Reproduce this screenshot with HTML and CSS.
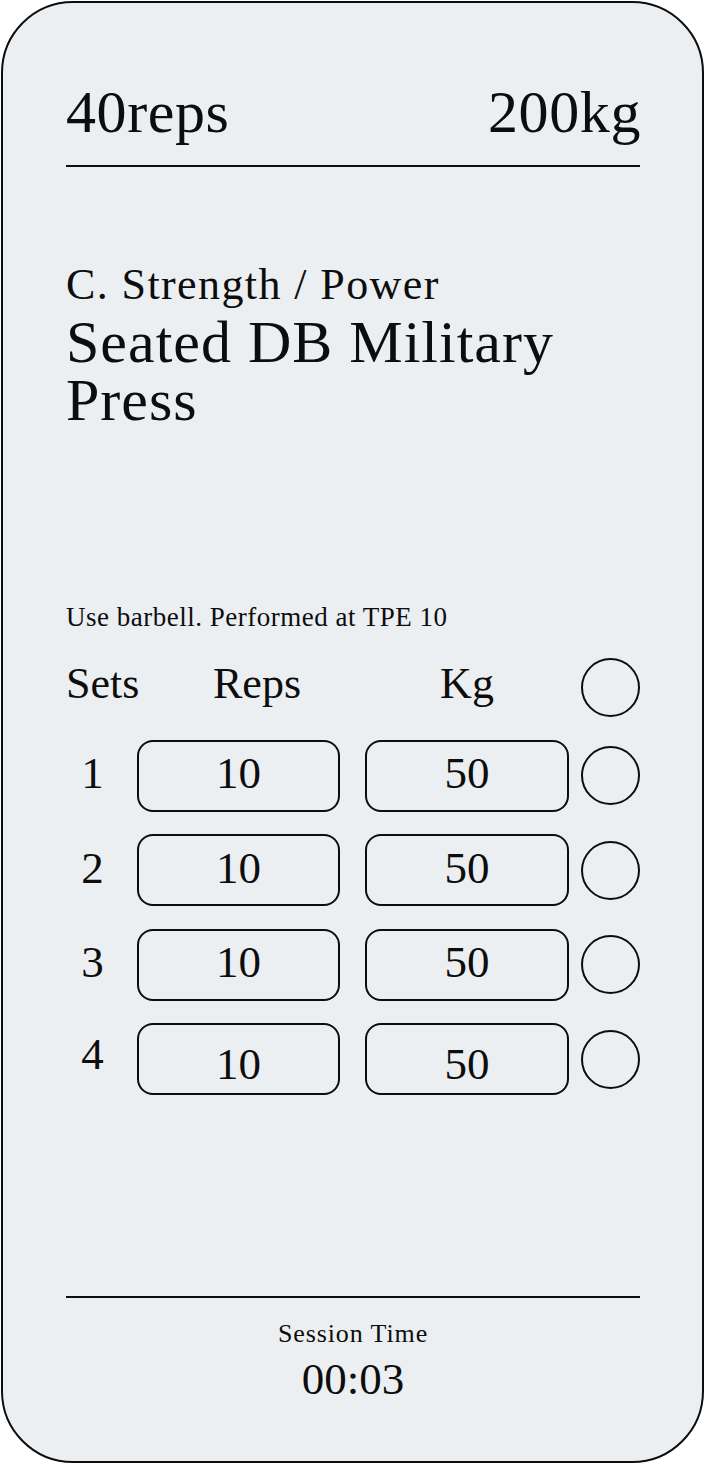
FILE: index.html
```html
<!DOCTYPE html>
<html lang="en">

<head>
  <meta charset="UTF-8">
  <meta name="viewport" content="width=device-width, initial-scale=1.0">
  <title>Workout - Seated DB Military Press</title>
  <link rel="stylesheet" href="styles.css">
</head>

<body>
  <div class="phone">
    <header class="totals">
      <span>40reps</span>
      <span>200kg</span>
    </header>

    <section class="exercise">
      <p class="category">C. Strength / Power</p>
      <h1 class="name">Seated DB Military Press</h1>
    </section>

    <p class="note">Use barbell. Performed at TPE 10</p>

    <div class="sets">
      <div class="set-row set-head">
        <span class="label">Sets</span>
        <span class="label label-reps">Reps</span>
        <span class="label label-kg">Kg</span>
        <span class="check"></span>
      </div>
      <div class="set-row">
        <span class="num">1</span>
        <span class="field">10</span>
        <span class="field field-kg">50</span>
        <span class="check"></span>
      </div>
      <div class="set-row">
        <span class="num">2</span>
        <span class="field">10</span>
        <span class="field field-kg">50</span>
        <span class="check"></span>
      </div>
      <div class="set-row">
        <span class="num">3</span>
        <span class="field">10</span>
        <span class="field field-kg">50</span>
        <span class="check"></span>
      </div>
      <div class="set-row set-row-last">
        <span class="num">4</span>
        <span class="field">10</span>
        <span class="field field-kg">50</span>
        <span class="check"></span>
      </div>
    </div>

    <footer class="session">
      <p class="session-label">Session Time</p>
      <p class="session-time">00:03</p>
    </footer>
  </div>
</body>

</html>
```

FILE: styles.css
```css
* {
  margin: 0;
  padding: 0;
}

:root {
  --ink: #0d0d0d;
  --screen-bg: #eceff1;
  --line: 2px solid var(--ink);
}

body {
  background: #fff;
  font-family: "Liberation Serif", "Times New Roman", serif;
  color: var(--ink);
}

.phone {
  box-sizing: border-box;
  display: flex;
  flex-direction: column;
  width: 703px;
  height: 1462px;
  margin: 1px;
  padding: 0 62px 0 63px;
  background: var(--screen-bg);
  border: var(--line);
  border-radius: 72px;
}

.totals {
  display: flex;
  justify-content: space-between;
  padding: 79px 0 23px;
  font-size: 60px;
  line-height: 60px;
  letter-spacing: .6px;
  border-bottom: var(--line);

  & span:last-child {
    margin-right: -1px;
  }
}

.exercise {
  margin-top: 96px;

  & .category {
    font-size: 44px;
    line-height: 44px;
    letter-spacing: 1.4px;
  }

  & .name {
    margin-top: 6px;
    font-size: 60px;
    font-weight: normal;
    line-height: 58px;
    letter-spacing: 1px;
  }
}

.note {
  margin-top: 175px;
  font-size: 27px;
  line-height: 27px;
  letter-spacing: .5px;
}

.sets {
  display: flex;
  flex-direction: column;
  gap: 22.5px;
  margin-top: 27px;
}

.set-row {
  display: grid;
  grid-template-columns: 59px 203px 217px 59px;
  column-gap: 12px;
  align-items: center;
  height: 72px;
  font-size: 45px;
  line-height: 45px;
}

.set-head {
  height: 59px;
  font-size: 44px;
  line-height: 44px;

  & .label {
    padding-bottom: 8px;
  }

  & .label-reps {
    padding-left: 76px;
  }

  & .label-kg {
    padding-left: 13px;
    text-align: center;
  }
}

.num {
  padding: 0 6px 4px 0;
  text-align: center;
}

.field {
  box-sizing: border-box;
  display: flex;
  justify-content: center;
  align-items: center;
  width: 203px;
  height: 72px;
  padding-bottom: 4px;
  border: var(--line);
  border-radius: 16px;
}

.field-kg {
  justify-self: end;
  width: 204px;
}

/* the last row sits a little off in the mockup */
.set-row-last {
  & .num {
    padding-bottom: 10px;
  }

  & .field {
    padding: 10px 0 0;
  }
}

.check {
  box-sizing: border-box;
  width: 59px;
  height: 59px;
  border: var(--line);
  border-radius: 50%;
}

.session {
  margin-top: auto;
  padding: 23px 0 59px;
  border-top: var(--line);
  text-align: center;

  & .session-label {
    font-size: 26px;
    line-height: 26px;
    letter-spacing: .9px;
  }

  & .session-time {
    margin-top: 10px;
    font-size: 45px;
    line-height: 45px;
  }
}
```
